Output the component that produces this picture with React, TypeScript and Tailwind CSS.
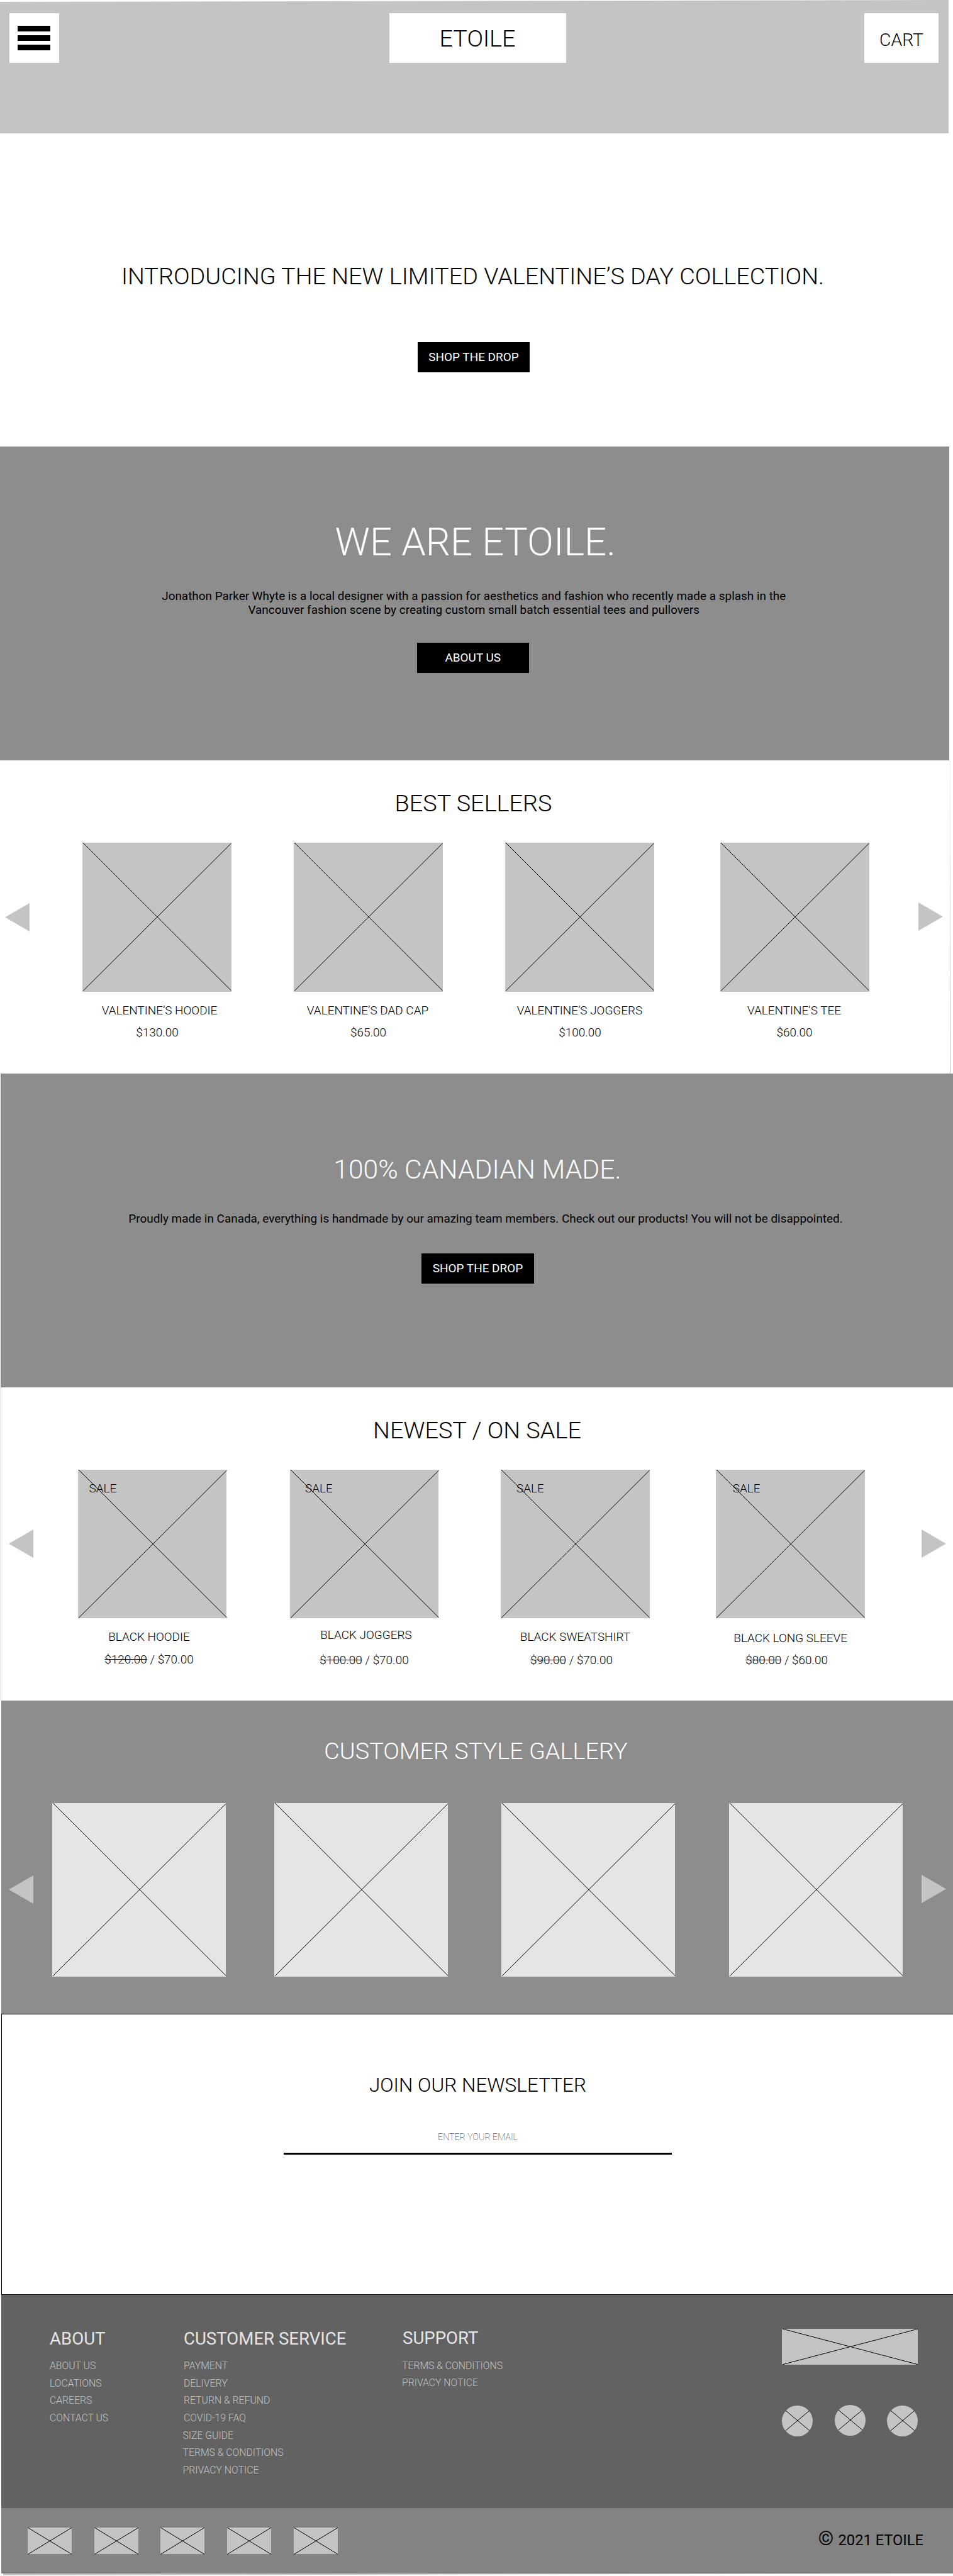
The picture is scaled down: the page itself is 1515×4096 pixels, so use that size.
import React from "react";

type Tone = "mid" | "light";

function Placeholder({ className, tone = "mid" }: { className: string; tone?: Tone }) {
  return (
    <div className={className + (tone === "mid" ? " bg-[#c4c4c4]" : " bg-[#e5e5e5]")}>
      <svg className="block h-full w-full overflow-visible" viewBox="0 0 100 100" preserveAspectRatio="none">
        <path d="M0.4 0L100 99.4M0.4 99.6L100 0.4" stroke="#000" strokeWidth="1" fill="none" vectorEffect="non-scaling-stroke" />
      </svg>
    </div>
  );
}

function Arrow({ dir, className }: { dir: "left" | "right"; className: string }) {
  return (
    <svg className={"block h-[45px] w-[39px] shrink-0 " + className} viewBox="0 0 39 45">
      <path d={dir === "left" ? "M39 0V45L0 22.5Z" : "M0 0V45L39 22.5Z"} fill="#c4c4c4" />
    </svg>
  );
}

function Button({ children, className }: { children: React.ReactNode; className: string }) {
  return (
    <button className={"block h-[48px] w-[178.5px] bg-black text-center text-[18.93px] leading-[48px] text-white " + className}>
      {children}
    </button>
  );
}

const bestSellers = [
  { name: "VALENTINE’S HOODIE", price: "$130.00", nameCls: "pl-[8px]", priceCls: "pl-[1px]" },
  { name: "VALENTINE’S DAD CAP", price: "$65.00", nameCls: "pr-[2px]", priceCls: "" },
  { name: "VALENTINE’S JOGGERS", price: "$100.00", nameCls: "", priceCls: "pl-[1px]" },
  { name: "VALENTINE’S TEE", price: "$60.00", nameCls: "pr-[2px]", priceCls: "pr-[1px]" },
];

const onSale = [
  { name: "BLACK HOODIE", was: "$120.00", now: "$70.00", saleCls: "left-[18px]", nameCls: "mt-[20.3px] pr-[10px]", priceCls: "mt-[16.9px] pr-[10px]" },
  { name: "BLACK JOGGERS", was: "$100.00", now: "$70.00", saleCls: "left-[24.5px]", nameCls: "mt-[17.3px] pl-[6px]", priceCls: "mt-[20.6px]" },
  { name: "BLACK SWEATSHIRT", was: "$90.00", now: "$70.00", saleCls: "left-[25px]", nameCls: "mt-[20.3px]", priceCls: "mt-[17.6px] pr-[12px]" },
  { name: "BLACK LONG SLEEVE", was: "$80.00", now: "$60.00", saleCls: "left-[26.5px]", nameCls: "mt-[21.7px]", priceCls: "mt-[16.1px] pr-[12px]" },
];

const aboutLinks = ["ABOUT US", "LOCATIONS", "CAREERS", "CONTACT US"];
const serviceLinks = ["PAYMENT", "DELIVERY", "RETURN & REFUND", "COVID-19 FAQ"];
const policyLinks = ["SIZE GUIDE", "TERMS & CONDITIONS", "PRIVACY NOTICE"];
const supportLinks = ["TERMS & CONDITIONS", "PRIVACY NOTICE"];

function LinkList({ items }: { items: string[] }) {
  return (
    <ul className="text-[15.77px] leading-[27.65px] font-light text-[#c4c4c4]">
      {items.map((t) => (
        <li key={t}>{t}</li>
      ))}
    </ul>
  );
}

function Social({ className }: { className: string }) {
  return (
    <svg className={"block h-[49px] w-[49px] " + className} viewBox="0 0 49 49">
      <circle cx="24.5" cy="24.5" r="24.5" fill="#c4c4c4" />
      <path d="M6 8L43.6 39.6M6 39.8L43.6 8.2" stroke="#000" strokeWidth="1" />
    </svg>
  );
}

export default function App() {
  return (
    <div className="h-[4096px] w-[1515px] overflow-hidden bg-white font-['Roboto',sans-serif] text-black">
      <header className="flex h-[212px] w-[1508px] items-start bg-[#c4c4c4] pt-[21px] pl-[15px] [clip-path:polygon(0_3px,100%_0,100%_100%,0_100%)]">
        <button className="flex h-[79px] w-[78.5px] flex-col items-center justify-center gap-[5.7px] bg-white">
          <span className="h-[9.2px] w-[52px] bg-black" />
          <span className="h-[9.2px] w-[52px] bg-black" />
          <span className="h-[9.2px] w-[52px] bg-black" />
        </button>
        <div className="ml-[525px] h-[79px] w-[281px] bg-white pt-[21px] text-center text-[37.85px] leading-[38px] font-light">ETOILE</div>
        <div className="ml-[474.5px] h-[79px] w-[118px] bg-white pt-[28.5px] text-center text-[28.4px] leading-[28px] font-light">CART</div>
      </header>

      <section className="flex h-[498px] w-[1508px] flex-col items-center pt-[208px]">
        <h1 className="mr-[5px] text-[37.85px] leading-[38px] font-light">INTRODUCING THE NEW LIMITED VALENTINE’S DAY COLLECTION.</h1>
        <Button className="mt-[86px] mr-[2px]">SHOP THE DROP</Button>
      </section>

      <section className="flex h-[499px] w-[1508.5px] flex-col items-center bg-[#8d8d8d] pt-[120.5px]">
        <h2 className="ml-[3px] text-[61.8px] leading-[63px] font-light text-white">WE ARE ETOILE.</h2>
        <p className="mt-[43.7px] mr-[2px] text-center text-[18.93px] leading-[22.2px]">
          Jonathon Parker Whyte is a local designer with a passion for aesthetics and fashion who recently made a splash in the
          <br />
          Vancouver fashion scene by creating custom small batch essential tees and pullovers
        </p>
        <Button className="mt-[40.4px] mr-[5px]">ABOUT US</Button>
      </section>

      <section className="flex h-[498px] w-[1515px]">
        <div className="w-[1510px] pt-[49px]">
          <h2 className="pr-[5px] text-center text-[37.85px] leading-[38px] font-light">BEST SELLERS</h2>
          <div className="mt-[44px] flex items-start">
            <Arrow dir="left" className="mt-[95.5px] ml-[8px]" />
            <div className="ml-[84px] grid grid-cols-[336px_336px_342px_237px] text-[18.93px] leading-[19px] font-light">
              {bestSellers.map((p) => (
                <div key={p.name} className="w-[237px] text-center">
                  <Placeholder className="h-[236.6px] w-[236.6px]" />
                  <p className={"mt-[20.4px] " + p.nameCls}>{p.name}</p>
                  <p className={"mt-[15.7px] " + p.priceCls}>{p.price}</p>
                </div>
              ))}
            </div>
            <Arrow dir="right" className="mt-[95px] ml-[77.5px]" />
          </div>
        </div>
        <div className="w-px bg-linear-to-b from-[#f4f4f4] to-[#bdbdbd]" />
      </section>

      <section className="ml-[1px] flex h-[499px] w-[1514px] flex-col items-center bg-[#8d8d8d] pt-[129.5px]">
        <h2 className="ml-[2px] text-[42.6px] leading-[44px] font-light text-white">100% CANADIAN MADE.</h2>
        <p className="mt-[46.8px] ml-[28px] text-[18.93px] leading-[22px]">
          Proudly made in Canada, everything is handmade by our amazing team members. Check out our products! You will not be disappointed.
        </p>
        <Button className="mt-[43.4px] ml-[3px]">SHOP THE DROP</Button>
      </section>

      <section className="ml-[1px] h-[498px] w-[1514px] border-l border-[#c4c4c4] pt-[49px]">
        <h2 className="text-center text-[37.85px] leading-[38px] font-light">NEWEST / ON SALE</h2>
        <div className="mt-[43.5px] flex items-start">
          <Arrow dir="left" className="mt-[95.8px] ml-[11.5px]" />
          <div className="ml-[71px] grid grid-cols-[337px_335.5px_342.2px_237px] text-[18.93px] leading-[19px] font-light">
            {onSale.map((p) => (
              <div key={p.name} className="relative w-[237px] text-center">
                <Placeholder className="h-[236.6px] w-[236.6px]" />
                <span className={"absolute top-[20px] " + p.saleCls}>SALE</span>
                <p className={p.nameCls}>{p.name}</p>
                <p className={p.priceCls}>
                  <span className="line-through">{p.was}</span> / {p.now}
                </p>
              </div>
            ))}
          </div>
          <Arrow dir="right" className="mt-[95px] ml-[89.5px]" />
        </div>
      </section>

      <section className="ml-[2px] h-[498px] w-[1513px] bg-[#8d8d8d] pt-[61.4px]">
        <h2 className="pr-[4px] text-center text-[37.85px] leading-[38px] font-light text-white">CUSTOMER STYLE GALLERY</h2>
        <div className="mt-[63.3px] flex items-start">
          <Arrow dir="left" className="mt-[115.5px] ml-[11.5px]" />
          <div className="ml-[30.5px] grid grid-cols-[352.7px_361.5px_362.3px_276px]">
            {[0, 1, 2, 3].map((i) => (
              <Placeholder key={i} tone="light" className="h-[276px] w-[276px]" />
            ))}
          </div>
          <Arrow dir="right" className="mt-[114.5px] ml-[30px]" />
        </div>
      </section>

      <section className="ml-[2px] flex h-[447px] w-[1513px] flex-col items-center border-y border-l border-black pt-[96.8px]">
        <h2 className="ml-[1px] text-[31.55px] leading-[32px] font-light">JOIN OUR NEWSLETTER</h2>
        <input
          className="mt-[59px] ml-[1px] h-[35px] w-[616.5px] border-b-[3px] border-black pb-[18px] text-center text-[14.2px] leading-[14px] font-thin outline-none placeholder:text-black placeholder:opacity-100"
          placeholder="ENTER YOUR EMAIL"
        />
      </section>

      <footer className="ml-[2px] w-[1513px]">
        <div className="flex h-[339px] items-start bg-[#626262] pl-[77px]">
          <div className="w-[213px] pt-[55.5px]">
            <h3 className="mb-[15.5px] text-[27.6px] leading-[28px] text-[#e5e5e5]">ABOUT</h3>
            <LinkList items={aboutLinks} />
          </div>
          <div className="w-[347px] pt-[55.5px]">
            <h3 className="mb-[15.5px] text-[27.6px] leading-[28px] text-[#e5e5e5]">CUSTOMER SERVICE</h3>
            <LinkList items={serviceLinks} />
            <div className="-ml-[1.5px]">
              <LinkList items={policyLinks} />
            </div>
          </div>
          <div className="w-[300px] pt-[55px]">
            <h3 className="mb-[15.5px] pl-[1px] text-[27.6px] leading-[28px] text-[#e5e5e5]">SUPPORT</h3>
            <LinkList items={supportLinks} />
          </div>
          <div className="ml-[304px] w-[216px] pt-[54px]">
            <Placeholder className="h-[57px] w-[216px]" />
            <div className="mt-[64px] flex justify-between">
              <Social className="mt-[1px]" />
              <Social className="" />
              <Social className="mt-[1px]" />
            </div>
          </div>
        </div>
        <div className="flex h-[104px] items-center justify-between bg-[#838383] pr-[47px] pl-[42.3px]">
          <div className="flex gap-[35.6px]">
            {[0, 1, 2, 3, 4].map((i) => (
              <Placeholder key={i} className="h-[42.7px] w-[70px]" />
            ))}
          </div>
          <p className="mb-[4px] flex items-baseline text-[23.66px] leading-[32px]">
            <span className="mr-[7.5px] text-[31px]">©</span>2021 ETOILE
          </p>
        </div>
        <div className="ml-[3px] h-[3px] bg-[#c4c4c4] [clip-path:polygon(0_0,100%_0,0_100%)]" />
      </footer>
    </div>
  );
}
